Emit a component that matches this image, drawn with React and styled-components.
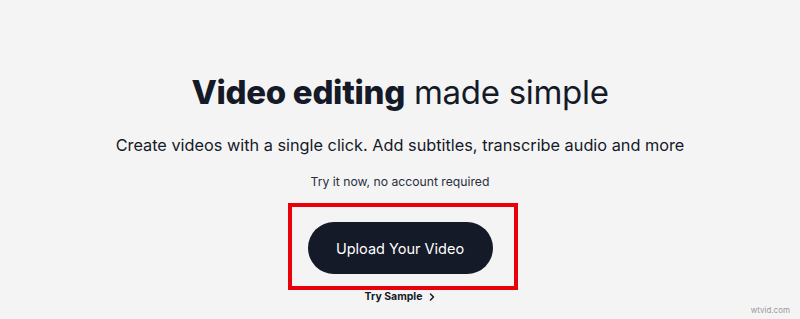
import React from "react";
import styled, { createGlobalStyle } from "styled-components";

const Global = createGlobalStyle`
  html, body { margin: 0; padding: 0; background: #f4f4f4; }
  body { font-family: Inter, "Noto Sans", sans-serif; color: #161b29; }
`;

const Page = styled.main`
  width: 800px;
  height: 319px;
  box-sizing: border-box;
  padding-top: 72px;
  display: flex;
  flex-direction: column;
  align-items: center;
  position: relative;
  overflow: hidden;
`;

const Title = styled.h1`
  margin: 0;
  font-size: 33px;
  line-height: 40px;
  font-weight: 400;
  letter-spacing: -0.3px;
  color: #151a28;
  b { font-weight: 800; }
`;

const Sub = styled.p`
  margin: 23px 0 0;
  font-size: 16.3px;
  line-height: 20px;
  color: #151a28;
`;

const Note = styled.p`
  margin: 19px 0 0;
  font-size: 12.2px;
  line-height: 16px;
  color: #2a2f3c;
`;

const Highlight = styled.div`
  margin-top: 13px;
  margin-left: 5px;
  border: 4px solid #e8000b;
  padding: 15px 21px 12px 16px;
  display: flex;
`;

const UploadButton = styled.button`
  width: 185px;
  height: 52px;
  border: none;
  border-radius: 26px;
  background: #151a28;
  color: #ffffff;
  font-family: inherit;
  font-size: 14.5px;
  font-weight: 400;
  cursor: pointer;
`;

const SampleLink = styled.a`
  margin-top: 0px;
  font-size: 10.5px;
  font-weight: 700;
  color: #151a28;
  display: flex;
  align-items: center;
  gap: 7px;
  text-decoration: none;
`;

const Watermark = styled.span`
  position: absolute;
  right: 10px;
  bottom: 4px;
  font-size: 8px;
  color: #9a9a9a;
`;

export default function App() {
  return (
    <>
      <Global />
      <Page>
        <Title>
          <b>Video editing</b> made simple
        </Title>
        <Sub>Create videos with a single click. Add subtitles, transcribe audio and more</Sub>
        <Note>Try it now, no account required</Note>
        <Highlight>
          <UploadButton>Upload Your Video</UploadButton>
        </Highlight>
        <SampleLink href="#">
          Try Sample
          <svg width="6" height="8" viewBox="0 0 6 8" fill="none">
            <path d="M1.5 1l3 3-3 3" stroke="#151a28" strokeWidth="1.5" strokeLinecap="round" strokeLinejoin="round" />
          </svg>
        </SampleLink>
        <Watermark>wtvid.com</Watermark>
      </Page>
    </>
  );
}
